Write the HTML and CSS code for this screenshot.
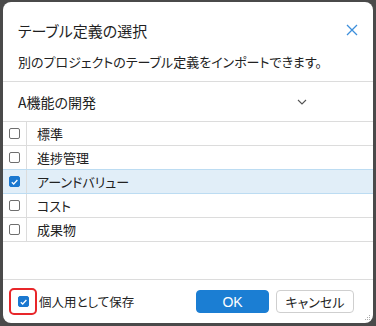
FILE: index.html
```html
<!DOCTYPE html>
<html lang="ja">
<head>
  <meta charset="UTF-8" />
  <meta name="viewport" content="width=device-width, initial-scale=1.0" />
  <title>テーブル定義の選択</title>
  <link rel="stylesheet" href="styles.css">
</head>
<body>
  <div class="dialog">
    <div class="header">
      <div class="title-row">
        <h1 class="title">テーブル定義の選択</h1>
        <button class="close" aria-label="閉じる">
          <svg width="12" height="12" viewBox="0 0 12 12"><path d="M1 1L11 11M11 1L1 11" stroke="#3d8fdb" stroke-width="1.3" fill="none"/></svg>
        </button>
      </div>
      <p class="subtitle">別のプロジェクトのテーブル定義をインポートできます。</p>
    </div>

    <div class="content">
      <div class="select">
        <span>A機能の開発</span>
        <svg class="chevron" width="10" height="6" viewBox="0 0 10 6"><path d="M1 1L5 5L9 1" stroke="#555" stroke-width="1.1" fill="none"/></svg>
      </div>

      <div class="table">
        <div class="row">
          <div class="cell-check"><span class="box"></span></div>
          <div class="cell-name">標準</div>
        </div>
        <div class="row">
          <div class="cell-check"><span class="box"></span></div>
          <div class="cell-name">進捗管理</div>
        </div>
        <div class="row selected">
          <div class="cell-check"><span class="box checked"><svg width="10" height="10" viewBox="0 0 10 10"><path d="M2 5.2L4.1 7.2L8.2 2.8" stroke="#fff" stroke-width="1.4" fill="none"/></svg></span></div>
          <div class="cell-name">アーンドバリュー</div>
        </div>
        <div class="row">
          <div class="cell-check"><span class="box"></span></div>
          <div class="cell-name">コスト</div>
        </div>
        <div class="row">
          <div class="cell-check"><span class="box"></span></div>
          <div class="cell-name">成果物</div>
        </div>
      </div>
    </div>

    <div class="footer">
      <label class="personal">
        <span class="highlight"><span class="box checked"><svg width="10" height="10" viewBox="0 0 10 10"><path d="M2 5.2L4.1 7.2L8.2 2.8" stroke="#fff" stroke-width="1.4" fill="none"/></svg></span></span>
        <span class="personal-text">個人用として保存</span>
      </label>
      <div class="actions">
        <button class="btn btn-primary">OK</button>
        <button class="btn">キャンセル</button>
      </div>
      <svg class="grip" width="6" height="6" viewBox="0 0 6 6"><rect x="4" y="0" width="1" height="1" fill="#aaa"/><rect x="2" y="2" width="1" height="1" fill="#aaa"/><rect x="4" y="2" width="1" height="1" fill="#aaa"/><rect x="0" y="4" width="1" height="1" fill="#aaa"/><rect x="2" y="4" width="1" height="1" fill="#aaa"/><rect x="4" y="4" width="1" height="1" fill="#aaa"/></svg>
    </div>
  </div>
</body>
</html>
```

FILE: styles.css
```css
body {
  margin: 0;
  padding: 2px 3px 3px 3px;
  background: #4a4a4a;
  font-family: "Noto Sans CJK JP", "Noto Sans", sans-serif;
  font-feature-settings: "palt";
  color: #222;
}
.dialog {
  width: 370px;
  height: 321px;
  background: #fff;
  border-radius: 8px;
  display: flex;
  flex-direction: column;
  overflow: hidden;
}
.header {
  padding: 16px 0 0 15px;
  border-bottom: 1px solid #dcdcdc;
}
.title-row {
  display: flex;
  align-items: center;
  justify-content: space-between;
  height: 24px;
  padding-right: 15px;
}
.title {
  margin: 0;
  font-size: 15px;
  font-weight: normal;
  color: #1f1f1f;
}
.close {
  border: none;
  background: none;
  padding: 0;
  width: 12px;
  height: 12px;
  display: flex;
}
.subtitle {
  margin: 10px 0 0 0;
  height: 20px;
  line-height: 20px;
  font-size: 13px;
  color: #222;
  padding-bottom: 9px;
}
.content {
  flex: 1;
  border-bottom: 1px solid #dcdcdc;
}
.select {
  height: 39px;
  display: flex;
  align-items: center;
  padding: 0 66px 0 15px;
  justify-content: space-between;
  font-size: 14px;
}
.table {
  border-top: 1px solid #dcdcdc;
}
.row {
  display: flex;
  height: 23px;
  border-bottom: 1px solid #dcdcdc;
  font-size: 13px;
}
.row.selected {
  background: #e1eef8;
  border-bottom-color: #bcdcf2;
  margin-top: -1px;
  border-top: 1px solid #bcdcf2;
}
.cell-check {
  width: 23px;
  border-right: 1px solid #dcdcdc;
  display: flex;
  align-items: center;
  justify-content: center;
}
.cell-name {
  display: flex;
  align-items: center;
  padding-left: 10px;
}
.box {
  width: 9px;
  height: 9px;
  border: 1.5px solid #6e6e6e;
  border-radius: 2px;
  display: flex;
  align-items: center;
  justify-content: center;
}
.box.checked {
  background: #1b78d0;
  border-color: #1b78d0;
}
.footer {
  height: 43px;
  display: flex;
  align-items: center;
  justify-content: space-between;
  padding: 0 19px 0 6px;
  position: relative;
}
.personal {
  display: flex;
  align-items: center;
  font-size: 12.5px;
}
.highlight {
  width: 24px;
  height: 23px;
  border: 2px solid #e8262a;
  border-radius: 5px;
  display: flex;
  align-items: center;
  justify-content: center;
}
.personal-text {
  margin-left: 2px;
}
.actions {
  display: flex;
  gap: 7px;
}
.btn {
  height: 23px;
  padding: 0;
  width: 78px;
  border: 1px solid #cfcfcf;
  border-radius: 4px;
  background: #fff;
  font-family: inherit;
  font-feature-settings: "palt";
  font-size: 13px;
  color: #222;
}
.btn-primary {
  width: 73px;
  background: #1b7ed3;
  border-color: #1b7ed3;
  color: #fff;
  font-family: "Liberation Sans", sans-serif;
  font-size: 14px;
}
.grip {
  position: absolute;
  right: 2px;
  bottom: 2px;
}
```
